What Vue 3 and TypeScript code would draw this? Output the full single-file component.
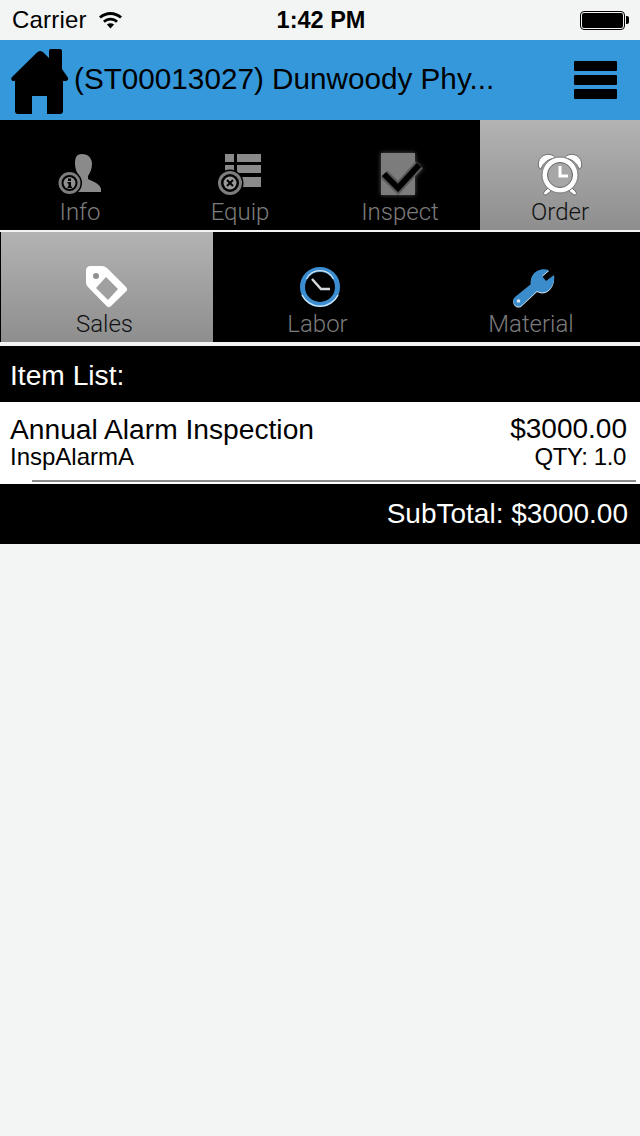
<script setup lang="ts">
const mainTabs = [
  { key: "info", label: "Info", active: false },
  { key: "equip", label: "Equip", active: false },
  { key: "inspect", label: "Inspect", active: false },
  { key: "order", label: "Order", active: true },
];

const subTabs = [
  { key: "sales", label: "Sales", active: true },
  { key: "labor", label: "Labor", active: false },
  { key: "material", label: "Material", active: false },
];
</script>

<template>
  <div class="screen">
    <div class="status-bar">
      <div class="status-left">
        <span class="carrier">Carrier</span>
        <svg class="wifi" width="26" height="19" viewBox="0 0 26 19">
          <path d="M1 6.600C7.600 .6 17.400 .6 24 6.600l-1.900 2C16.600 3.700 8.400 3.700 2.900 8.600Z" fill="#000" />
          <path d="M5 10.700C9.500 6.700 15.500 6.700 20 10.700l-1.900 2C14.800 9.900 10.200 9.900 6.900 12.700Z" fill="#000" />
          <path d="M8.900 14.600C11.200 12.700 13.800 12.700 16.100 14.600L12.500 18.500Z" fill="#000" />
        </svg>
      </div>
      <span class="clock">1:42 PM</span>
      <div class="battery"><span class="battery-fill"></span><span class="battery-tip"></span></div>
    </div>

    <header class="app-bar">
      <svg class="home" width="58" height="66" viewBox="0 0 58 66">
        <path
          d="M26 4.500c2-2 4.500-2 6.500 0L38 10V3a2 2 0 0 1 2-2h9a2 2 0 0 1 2 2v18l5.500 8c1.500 2 .5 4-2 4H52v30a3 3 0 0 1-3 3H36V48H21v18H7a3 3 0 0 1-3-3V33H2.500c-2 0-3-2-1.500-4Z"
          fill="#000"
        />
      </svg>
      <span class="job-title">(ST00013027) Dunwoody Phy...</span>
      <div class="menu"><span></span><span></span><span></span></div>
    </header>

    <nav class="tabs main-tabs">
      <div v-for="tab in mainTabs" :key="tab.key" :class="['tab', { 'is-active': tab.active }]">
        <svg v-if="tab.key === 'info'" class="tab-icon" width="50" height="44" viewBox="0 0 50 44">
          <path
            d="M27 2c6 0 10 4 10 10 0 5-2 9-4 12v3c3 2 12 4 13 10v3H20c2-3 3-7 2-11l-1-2c1-1 2-1 3-1v-2c-2-3-4-7-4-12 0-6 1-10 7-10Z"
            fill="#8a8a8a"
          />
          <circle cx="14.500" cy="31" r="12.500" fill="#000" />
          <circle cx="14.500" cy="31" r="9.500" fill="none" stroke="#7d7d7d" stroke-width="3" />
          <circle cx="14.500" cy="31" r="6" fill="#8f8f8f" />
          <path d="M13 26.500h3v2.500h-3ZM12.500 30h3.500v4.500h1V36h-4.500v-1.500h1V31.500h-1Z" fill="#000" />
        </svg>
        <svg v-else-if="tab.key === 'equip'" class="tab-icon" width="50" height="44" viewBox="0 0 50 44">
          <path d="M10 2h9v8h-9ZM22 2h24v8H22ZM10 13h9v8h-9ZM22 13h24v8H22ZM22 25h24v10H22Z" fill="#8a8a8a" />
          <circle cx="15" cy="31" r="13.500" fill="#000" />
          <circle cx="15" cy="31" r="10.500" fill="none" stroke="#7d7d7d" stroke-width="3" />
          <circle cx="15" cy="31" r="6.500" fill="#999" />
          <path d="M12 28l6 6M18 28l-6 6" stroke="#000" stroke-width="2" />
        </svg>
        <svg v-else-if="tab.key === 'inspect'" class="tab-icon glow" width="50" height="44" viewBox="0 0 50 44">
          <rect x="6" y="1" width="34" height="42" fill="#7c7c7c" />
          <path d="M9 22l14 14 21-23" fill="none" stroke="#5a5a5a" stroke-width="10" />
          <path d="M9 22l14 14 21-23" fill="none" stroke="#000" stroke-width="6" />
        </svg>
        <svg v-else class="tab-icon" width="50" height="44" viewBox="0 0 50 44">
          <path d="M4 16C1 8 8 0 17 3c2 1 3 2 3 3C13 7 8 11 6 17ZM46 16C49 8 42 0 33 3c-2 1-3 2-3 3 7 1 12 5 14 11Z" fill="#fff" stroke="#6e6e6e" stroke-width="1" />
          <path d="M13 36l-4 4c-1 2 0 3 2 3l5-4ZM37 36l4 4c1 2 0 3-2 3l-5-4Z" fill="#fff" stroke="#6e6e6e" stroke-width="1" />
          <circle cx="25" cy="23" r="18" fill="#fff" stroke="#777" stroke-width="1" />
          <circle cx="25" cy="23" r="12.500" fill="#a6a6a6" stroke="#666" stroke-width="1" />
          <path d="M25 14v10h8" fill="none" stroke="#fff" stroke-width="3" />
        </svg>
        <span class="tab-label">{{ tab.label }}</span>
      </div>
    </nav>

    <nav class="tabs sub-tabs">
      <div v-for="tab in subTabs" :key="tab.key" :class="['tab', { 'is-active': tab.active }]">
        <svg v-if="tab.key === 'sales'" class="tab-icon" width="44" height="44" viewBox="0 0 44 44">
          <path
            d="M6 2h12c2 0 4 1 6 3l18 18c1.500 1.500 1.500 3 0 4.500L27 42c-1.500 1.500-3 1.500-4.500 0L4 23c-1.500-1.500-2-3-2-5V6c0-2 2-4 4-4Z"
            fill="#fff"
          />
          <circle cx="12" cy="12" r="3" fill="#909090" />
          <path d="M22 13l12 12-10 11-12-12Z" fill="#a0a0a0" />
        </svg>
        <svg v-else-if="tab.key === 'labor'" class="tab-icon" width="44" height="44" viewBox="0 0 44 44">
          <circle cx="22" cy="23" r="17.500" fill="#000" stroke="#3a8dd0" stroke-width="5" />
          <path d="M8.500 15a15 15 0 0 1 27 0" fill="none" stroke="#d8e4ee" stroke-width="1.200" />
          <path d="M4 31a20 20 0 0 0 36 0" fill="none" stroke="#cfe3f3" stroke-width="1.500" />
          <path d="M14 15l9 10h9" fill="none" stroke="#d4d8db" stroke-width="2.500" />
        </svg>
        <svg v-else class="tab-icon" width="44" height="44" viewBox="0 0 44 44">
          <path
            d="M37 7L30 13L34 18L42 12C43 20 39 27 33 29C30 30 27 29 25 28L10 42C8 44 5 44 3 42C1 40 0 37 3 34L19 21C18 16 20 11 25 8C29 6 33 6 37 7Z"
            fill="#d5e2ec"
          />
          <path
            d="M37 6L30 12L34 17L42 11C43 19 39 26 33 28C30 29 27 28 25 27L10 41C8 43 5 43 3 41C1 39 0 36 3 33L19 20C18 15 20 10 25 7C29 5 33 5 37 6Z"
            fill="#3b8ccb"
          />
          <circle cx="6.500" cy="37" r="1.800" fill="#dfe8ee" />
        </svg>
        <span class="tab-label">{{ tab.label }}</span>
      </div>
    </nav>

    <div class="section-head">Item List:</div>

    <div class="item-row">
      <div class="item-line">
        <span class="item-name">Annual Alarm Inspection</span>
        <span class="item-price">$3000.00</span>
      </div>
      <div class="item-line sub">
        <span>InspAlarmA</span>
        <span class="qty">QTY: 1.0</span>
      </div>
      <div class="item-rule"></div>
    </div>

    <div class="subtotal">SubTotal: $3000.00</div>
  </div>
</template>

<style scoped>
.screen {
  width: 640px;
  height: 1136px;
  overflow: hidden;
  background: #f3f5f4;
  font-family: "Liberation Sans", Arial, sans-serif;
  color: #000;
}

.status-bar {
  height: 40px;
  padding: 0 10px 0 12px;
  box-sizing: border-box;
  display: grid;
  grid-template-columns: 1fr auto 1fr;
  align-items: center;
  font-size: 24px;
}

.status-left {
  display: flex;
  align-items: center;
  gap: 11px;
}

.carrier {
  letter-spacing: 0.2px;
}

.wifi {
  margin-top: -2px;
}

.clock {
  font-size: 23.5px;
  font-weight: 700;
}

.battery {
  justify-self: end;
  width: 45px;
  height: 19px;
  box-sizing: border-box;
  position: relative;
  border: 1px solid #000;
  border-radius: 4px;
  padding: 1px;
  margin-right: 5px;
}

.battery-fill {
  display: block;
  height: 100%;
  background: #000;
  border-radius: 2px;
}

.battery-tip {
  position: absolute;
  right: -5px;
  top: 4px;
  width: 3px;
  height: 8px;
  background: #000;
  border-radius: 0 2px 2px 0;
}

.app-bar {
  height: 80px;
  background: #3498db;
  display: flex;
  align-items: center;
  padding-left: 11px;
  position: relative;
}

.home {
  flex: none;
  margin-top: 2px;
  filter: blur(0.5px);
}

.job-title {
  margin-left: 5px;
  margin-top: -2px;
  font-size: 29.7px;
  white-space: nowrap;
}

.menu {
  position: absolute;
  right: 23px;
  top: 21px;
  width: 43px;
  display: grid;
  gap: 4px;
}

.menu span {
  height: 10px;
  background: #000;
  border-radius: 1px;
}

.tabs {
  display: grid;
  background: #000;
}

.main-tabs {
  height: 110px;
  grid-template-columns: repeat(4, 160px);
}

.sub-tabs {
  height: 110px;
  margin-top: 2px;
  grid-template-columns: 212px 214px 213px;
  border-left: 1px solid #000;
  box-sizing: border-box;
}

.tab {
  display: flex;
  flex-direction: column;
  align-items: center;
  justify-content: flex-end;
  color: #7c7c7c;
  font-size: 24px;
  padding-bottom: 4px;
  box-sizing: border-box;
}

.tab.is-active {
  background: linear-gradient(#b3b3b3, #8e8e8e);
  color: #111;
}

.tab-icon {
  display: block;
  margin-bottom: 2px;
  filter: blur(0.4px);
}

.sub-tabs .tab:first-child .tab-icon {
  margin-right: 2px;
}

.glow {
  filter: blur(0.4px) drop-shadow(0 0 2px #555);
}

.tab-label {
  line-height: 28px;
  font-family: Roboto, "Liberation Sans", Arial, sans-serif;
  font-weight: 300;
}

.sub-tabs .tab-label {
  margin-right: 5px;
}

.section-head {
  margin-top: 4px;
  height: 56px;
  background: #000;
  color: #fff;
  font-size: 28.2px;
  line-height: 59px;
  padding-left: 10px;
}

.item-row {
  height: 82px;
  background: #fff;
  padding: 12px 13px 0 10px;
  box-sizing: border-box;
  position: relative;
}

.item-line {
  display: flex;
  justify-content: space-between;
  font-size: 28.2px;
  line-height: 30px;
}

.item-price {
  font-size: 28px;
}

.item-line.sub {
  font-size: 24px;
  line-height: 25px;
}

.qty {
  margin-right: 1px;
  letter-spacing: -0.4px;
}

.item-rule {
  position: absolute;
  left: 32px;
  right: 4px;
  bottom: 2px;
  height: 2px;
  background: #8a8a8a;
}

.subtotal {
  height: 60px;
  background: #000;
  color: #fff;
  font-size: 28px;
  line-height: 60px;
  text-align: right;
  padding-right: 12px;
}
</style>
